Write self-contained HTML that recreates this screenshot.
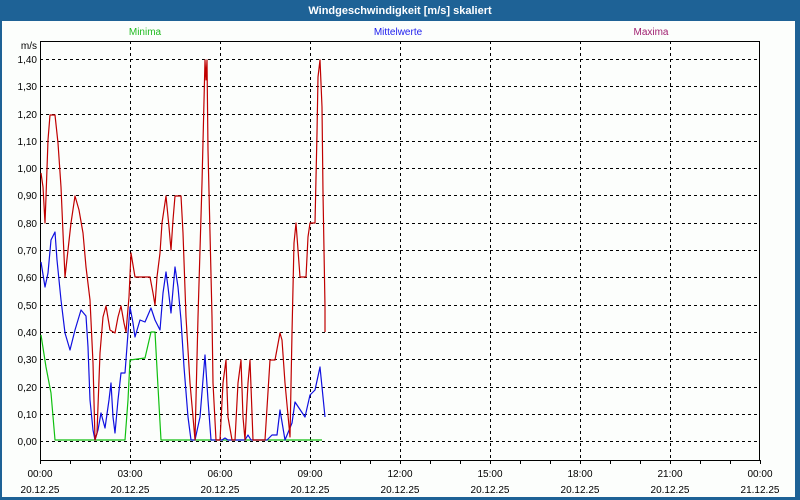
<!DOCTYPE html>
<html><head><style>
html,body{margin:0;padding:0;width:800px;height:500px;overflow:hidden;background:#1e6296;}
svg{display:block;font-family:"Liberation Sans","DejaVu Sans",sans-serif;}
</style></head><body>
<svg width="800" height="500" xmlns="http://www.w3.org/2000/svg">
<rect x="0" y="0" width="800" height="500" fill="#1e6296"/>
<rect x="2" y="21" width="793" height="476" fill="#fcfefc"/>
<text x="400" y="14" fill="#fff" font-size="11" font-weight="bold" text-anchor="middle">Windgeschwindigkeit [m/s] skaliert</text>
<text x="145" y="35" fill="#22bb22" font-size="10" text-anchor="middle">Minima</text>
<text x="398" y="35" fill="#2020ee" font-size="10" text-anchor="middle">Mittelwerte</text>
<text x="651" y="35" fill="#a02070" font-size="10" text-anchor="middle">Maxima</text>
<text x="37" y="49" fill="#000" font-size="10" text-anchor="end">m/s</text>
<g stroke="#000" stroke-width="1" stroke-dasharray="3,3" fill="none">
<path d="M40 59.5H760M40 86.5H760M40 114.5H760M40 141.5H760M40 168.5H760M40 195.5H760M40 223.5H760M40 250.5H760M40 277.5H760M40 305.5H760M40 332.5H760M40 359.5H760M40 387.5H760M40 414.5H760M40 441.5H760"/>
<path d="M130.5 41V460M220.5 41V460M310.5 41V460M400.5 41V460M490.5 41V460M580.5 41V460M670.5 41V460"/>
</g>
<rect x="40.5" y="41.5" width="719" height="419" fill="none" stroke="#000"/>
<g stroke="#000"><path d="M70.5 460v4M100.5 460v4M130.5 460v4M160.5 460v4M190.5 460v4M220.5 460v4M250.5 460v4M280.5 460v4M310.5 460v4M340.5 460v4M370.5 460v4M400.5 460v4M430.5 460v4M460.5 460v4M490.5 460v4M520.5 460v4M550.5 460v4M580.5 460v4M610.5 460v4M640.5 460v4M670.5 460v4M700.5 460v4M730.5 460v4M760.5 460v4M40.5 460v4"/></g>
<g font-size="10" fill="#000" text-anchor="end">
<text x="37" y="63">1,40</text><text x="37" y="90">1,30</text><text x="37" y="118">1,20</text><text x="37" y="145">1,10</text><text x="37" y="172">1,00</text><text x="37" y="199">0,90</text><text x="37" y="227">0,80</text><text x="37" y="254">0,70</text><text x="37" y="281">0,60</text><text x="37" y="309">0,50</text><text x="37" y="336">0,40</text><text x="37" y="363">0,30</text><text x="37" y="391">0,20</text><text x="37" y="418">0,10</text><text x="37" y="445">0,00</text>
</g>
<g font-size="10" fill="#000" text-anchor="middle">
<text x="40" y="477">00:00</text><text x="40" y="493">20.12.25</text>
<text x="130" y="477">03:00</text><text x="130" y="493">20.12.25</text>
<text x="220" y="477">06:00</text><text x="220" y="493">20.12.25</text>
<text x="310" y="477">09:00</text><text x="310" y="493">20.12.25</text>
<text x="400" y="477">12:00</text><text x="400" y="493">20.12.25</text>
<text x="490" y="477">15:00</text><text x="490" y="493">20.12.25</text>
<text x="580" y="477">18:00</text><text x="580" y="493">20.12.25</text>
<text x="670" y="477">21:00</text><text x="670" y="493">20.12.25</text>
<text x="760" y="477">00:00</text><text x="760" y="493">21.12.25</text>
</g>
<g fill="none" stroke-width="1.2" stroke-linejoin="round">
<polyline stroke="#10c010" points="41,335 46,367 51,393 55,440 125,440 128,400 130,360 145,358 151,332 155,332 158,387 161,440 322,440"/>
<polyline stroke="#1010e0" points="41,262 45,287 48,273 51,240 55,232 57,260 61,300 65,333 70,350 75,330 81,310 86,316 88,347 90,400 93,430 95,440 98,430 101,413 105,428 109,400 111,383 113,417 115,433 118,400 121,373 125,373 128,333 130,307 133,323 135,337 140,320 145,322 151,308 155,320 160,330 163,293 166,272 168,287 171,313 173,290 175,267 178,287 181,320 184,367 188,417 191,440 195,440 200,417 205,355 208,400 211,440 222,440 225,438 228,440 245,440 248,435 251,440 267,440 272,435 277,435 280,410 285,440 292,423 295,402 305,417 310,395 315,390 320,367 325,417"/>
<polyline stroke="#c00000" points="41,173 43,187 45,223 46,197 48,140 50,115 55,115 58,143 61,187 63,233 65,277 68,250 71,223 75,196 79,210 83,233 86,267 90,300 93,363 95,440 97,433 100,353 103,317 106,306 110,330 115,333 118,317 121,306 124,323 126,332 129,297 131,253 135,277 150,277 153,293 155,305 157,277 160,253 162,223 166,196 169,227 171,250 173,220 175,196 181,196 183,233 186,317 190,383 193,417 195,440 198,317 202,183 205,60 206,80 207,60 208,150 210,233 212,317 213,383 216,440 220,440 223,383 226,360 228,417 232,440 235,440 238,383 241,360 243,417 245,440 248,383 250,360 253,440 265,440 270,360 275,360 280,333 282,340 285,383 290,437 292,333 294,243 296,223 298,250 300,277 306,277 308,237 310,223 315,223 317,133 318,77 320,60 322,107 323,193 325,307 325,332"/>
</g>
</svg>
</body></html>
